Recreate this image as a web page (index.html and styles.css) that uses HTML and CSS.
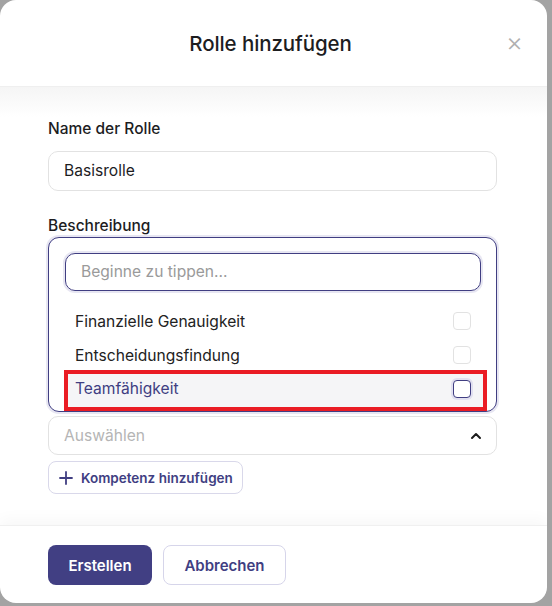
FILE: index.html
```html
<!DOCTYPE html>
<html>
<head>
    <title>Rolle hinzufügen</title>
    <link rel="stylesheet" href="styles.css">
</head>
<body>
    <div class="modal">
        <div class="modal-header">
            <h1>Rolle hinzufügen</h1>
            <span class="close">&times;</span>
        </div>

        <div class="modal-body">
            <label class="field-label">Name der Rolle</label>
            <div class="input">Basisrolle</div>

            <label class="field-label desc-label">Beschreibung</label>
            <div class="dropdown">
                <div class="search">Beginne zu tippen...</div>
                <div class="option">Finanzielle Genauigkeit<span class="check"></span></div>
                <div class="option">Entscheidungsfindung<span class="check"></span></div>
                <div class="option active marked">Teamfähigkeit<span class="check"></span></div>
            </div>

            <div class="select">
                <span>Auswählen</span>
                <svg width="12" height="8" viewBox="0 0 12 8"><path d="M2 6l4-4 4 4" fill="none" stroke="#1c1c1c" stroke-width="2" stroke-linecap="round" stroke-linejoin="round"/></svg>
            </div>

            <button class="add-btn">
                <svg width="14" height="14" viewBox="0 0 14 14"><path d="M7 1v12M1 7h12" stroke="#403e82" stroke-width="1.8" stroke-linecap="round"/></svg>
                Kompetenz hinzufügen
            </button>
        </div>

        <div class="modal-footer">
            <button class="btn btn-primary">Erstellen</button>
            <button class="btn btn-outline">Abbrechen</button>
        </div>
    </div>
</body>
</html>
```

FILE: styles.css
```css
body { margin: 0; background: #a3a3a3; font-family: Inter, "Noto Sans", sans-serif; color: #1d1d1f; }

.modal {
    width: 547px;
    height: 603px;
    background: #fff;
    border-radius: 16px;
    overflow: hidden;
    display: flex;
    flex-direction: column;
}

.modal-header {
    height: 86px;
    flex-shrink: 0;
    display: flex;
    align-items: center;
    justify-content: center;
    position: relative;
    border-bottom: 1px solid #efefef;
}
.modal-header h1 { margin: 0 0 0 -6px; font-size: 20.5px; font-weight: 500; letter-spacing: -0.1px; }
.close {
    position: absolute;
    right: 24px;
    top: 28px;
    font-size: 26px;
    line-height: 28px;
    color: #b0b0b0;
    font-weight: 300;
}

.modal-body {
    flex: 1;
    padding: 32px 50px 0 48px;
    background: linear-gradient(#f5f5f5, #fff 30px);
    display: flex;
    flex-direction: column;
    align-items: stretch;
}

.field-label { font-size: 15.5px; font-weight: 500; line-height: 20px; display: block; }
.desc-label { margin-top: 25px; }

.input {
    margin-top: 12px;
    height: 38px;
    border: 1px solid #e2e2e2;
    border-radius: 10px;
    padding-left: 15px;
    font-size: 15.6px;
    line-height: 38px;
    background: #fff;
}

.dropdown {
    margin-top: 1px;
    border: 1px solid #403e82;
    border-radius: 11px;
    box-shadow: 0 0 0 2px #e7e6f2;
    background: #fff;
    padding: 15px 15px 4px 16px;
}
.search {
    height: 36px;
    border: 1px solid #403e82;
    border-radius: 10px;
    box-shadow: 0 0 0 2px #e7e6f2;
    padding-left: 15px;
    line-height: 36px;
    font-size: 15.6px;
    color: #9a9a9a;
    margin-bottom: 13px;
}
.option {
    height: 34px;
    display: flex;
    align-items: center;
    justify-content: space-between;
    padding: 0 10px 0 10px;
    font-size: 15.6px;
    color: #222;
}
.option.active { color: #403e82; background: #f5f5f7; }
.option.marked {
    outline: 4px solid #ea1c24;
    margin: 2px -2px 0 3px;
    height: 33px;
    padding: 0 12px 4px 7px;
    box-sizing: border-box;
}
.check {
    width: 16px;
    height: 16px;
    border: 1px solid #e2e2e2;
    border-radius: 4px;
    background: #fff;
}
.option.active .check { border-color: #403e82; box-shadow: 0 0 0 2px #e1e0f0; }

.select {
    margin-top: 4px;
    height: 37px;
    border: 1px solid #e2e2e2;
    border-radius: 10px;
    padding: 0 14px 0 15px;
    display: flex;
    align-items: center;
    justify-content: space-between;
    font-size: 15.6px;
    color: #b5b5b5;
}

.add-btn {
    margin-top: 6px;
    align-self: flex-start;
    height: 33px;
    padding: 0 9px 0 10px;
    border: 1px solid #d9d8ea;
    border-radius: 8px;
    background: #fff;
    display: flex;
    align-items: center;
    gap: 8px;
    font-family: inherit;
    font-size: 13.5px;
    font-weight: 600;
    color: #403e82;
}

.modal-footer {
    height: 78px;
    flex-shrink: 0;
    border-top: 1px solid #f0f0f0;
    box-shadow: 0 -6px 14px rgba(0, 0, 0, 0.03);
    padding: 19px 0 0 48px;
    display: flex;
    align-items: flex-start;
    gap: 11px;
    box-sizing: border-box;
}
.btn {
    height: 40px;
    border-radius: 8px;
    font-family: inherit;
    font-size: 15px;
    font-weight: 600;
    padding: 0 20px;
}
.btn-primary { background: #413f83; color: #fff; border: none; width: 104px; }
.btn-outline { background: #fff; color: #403e82; border: 1px solid #d6d5ea; width: 123px; }
```
